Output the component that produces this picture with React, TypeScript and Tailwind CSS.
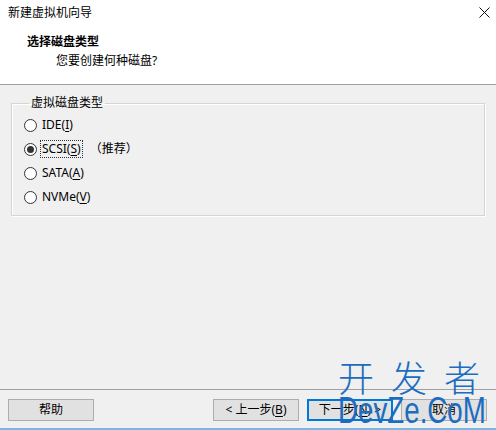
import React from "react";

const font = { fontFamily: '"Noto Sans", "Noto Sans CJK SC", sans-serif' };

function Radio({ checked }: { checked?: boolean }) {
    return (
        <span className="w-[13px] h-[13px] rounded-full border border-[#333333] bg-white flex items-center justify-center shrink-0">
            {checked && <span className="w-[7px] h-[7px] rounded-full bg-[#333333]" />}
        </span>
    );
}

function Btn({ children, primary }: { children: React.ReactNode; primary?: boolean }) {
    return (
        <button
            className={
                primary
                    ? "w-[86px] h-[22px] bg-[#e1e1e1] border-2 border-[#0078d7] text-[12px] text-black flex items-center justify-center"
                    : "w-[86px] h-[22px] bg-[#e1e1e1] border border-[#adadad] text-[12px] text-black flex items-center justify-center"
            }
        >
            {children}
        </button>
    );
}

export default function App() {
    const disks = [
        { name: "IDE", key: "I" },
        { name: "SCSI", key: "S", checked: true },
        { name: "SATA", key: "A" },
        { name: "NVMe", key: "V" },
    ];

    return (
        <div className="w-[496px] h-[430px] bg-[#f0f0f0] flex flex-col relative overflow-hidden text-[12px] text-black leading-[16px]" style={font}>
            {/* title bar */}
            <div className="h-[30px] bg-white flex items-center justify-between pl-[8px] pr-[8px]">
                <span className="-mt-[4px]">新建虚拟机向导</span>
                <svg width="11" height="11" viewBox="0 0 11 11" className="mr-[-2px] -mt-[6px]">
                    <path d="M0.5 0.5 L10.5 10.5 M10.5 0.5 L0.5 10.5" stroke="#111" strokeWidth="1" />
                </svg>
            </div>

            {/* header */}
            <div className="h-[55px] bg-white border-b border-[#a0a0a0] pl-[27px] pt-[4px]">
                <div className="font-bold">选择磁盘类型</div>
                <div className="pl-[29px] mt-[3px]">您要创建何种磁盘?</div>
            </div>

            {/* body */}
            <div className="flex-1 px-[11px] pt-[10px]">
                <fieldset className="border border-[#d5d5d5] w-[474px] pl-[12px] pb-[6px] shadow-[inset_1px_1px_0_#ffffff,1px_1px_0_#ffffff]">
                    <legend className="ml-[5px] px-[2px] text-[#000]">虚拟磁盘类型</legend>
                    <div className="pt-[2px] flex flex-col">
                        {disks.map((d) => (
                            <div key={d.name} className="h-[24px] flex items-center gap-[4px]">
                                <Radio checked={d.checked} />
                                <span className={d.checked ? "outline outline-1 outline-dotted outline-[#333] px-[1px]" : "px-[1px]"}>
                                    {d.name}(<span className="underline underline-offset-2">{d.key}</span>)
                                </span>
                                {d.checked && <span className="ml-[4px]">（推荐）</span>}
                            </div>
                        ))}
                    </div>
                </fieldset>
            </div>

            {/* footer */}
            <div className="h-[39px] border-t border-[#a0a0a0] flex items-start pt-[9px] pl-[8px] pr-[9px]">
                <Btn>帮助</Btn>
                <div className="flex-1" />
                <div className="flex gap-[8px]">
                    <Btn>&lt; 上一步(<span className="underline underline-offset-2">B</span>)</Btn>
                    <Btn primary>下一步(<span className="underline underline-offset-2">N</span>) &gt;</Btn>
                    <Btn>取消</Btn>
                </div>
            </div>
            <div className="h-[2px] bg-[#7eb4e4]" />

            {/* watermark */}
            <div className="absolute left-[338px] top-[356px] text-[#1c6cbf] pointer-events-none">
                <div className="text-[36px] leading-[40px] tracking-[17px] font-light" style={{ fontFamily: '"Noto Sans CJK SC", sans-serif' }}>开发者</div>
                <div className="text-[36px] leading-[34px] -mt-[2px] origin-left scale-x-[0.77] whitespace-nowrap" style={{ fontFamily: '"Liberation Sans", sans-serif' }}>DevZe.CoM</div>
            </div>
        </div>
    );
}
